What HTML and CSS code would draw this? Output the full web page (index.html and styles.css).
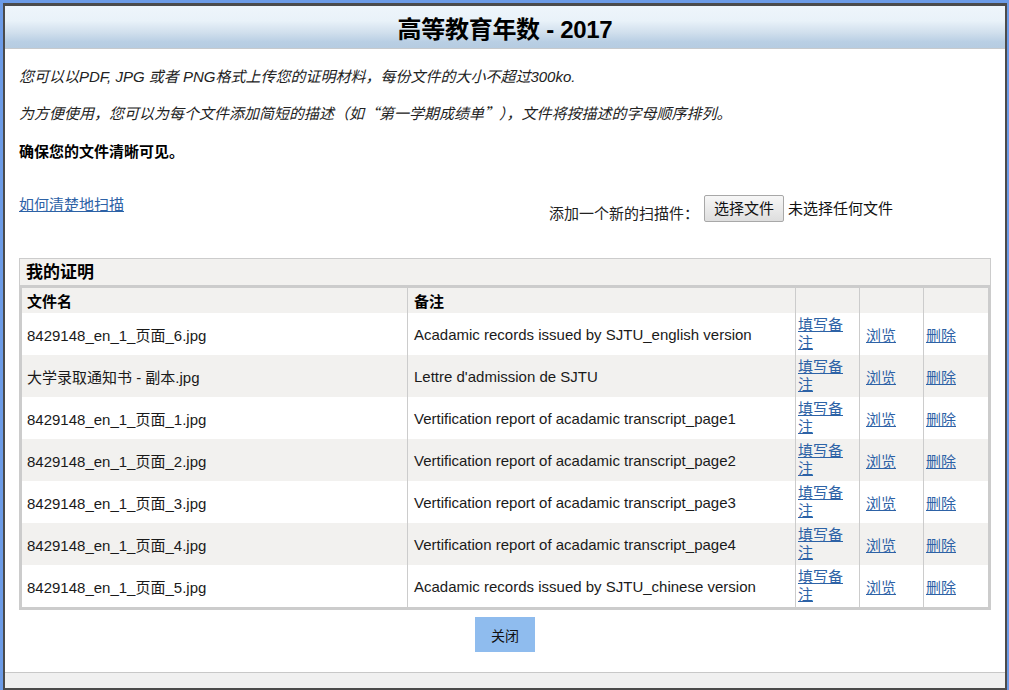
FILE: index.html
```html
<!DOCTYPE html>
<html lang="zh">
<head>
<meta charset="utf-8">
<title>高等教育年数 - 2017</title>
<link rel="stylesheet" href="styles.css">
</head>
<body>
<div class="frame">
  <div class="window">
    <div class="header"><h1 class="title">高等教育年数 - 2017</h1></div>
    <div class="main">
      <p class="intro">您可以以PDF, JPG 或者 PNG格式上传您的证明材料，每份文件的大小不超过300ko.</p>
      <p class="intro">为方便使用，您可以为每个文件添加简短的描述（如<span class="cjk">“</span>第一学期成绩单<span class="cjk">”</span>），文件将按描述的字母顺序排列。</p>
      <p class="strong">确保您的文件清晰可见。</p>
      <div class="tools">
        <a class="link scan-link" href="#">如何清楚地扫描</a>
        <div class="picker">
          <span class="picker-label">添加一个新的扫描件：</span>
          <span class="file-btn">选择文件</span>
          <span class="file-none">未选择任何文件</span>
        </div>
      </div>
      <div class="certs">
        <div class="certs-caption">我的证明</div>
        <table class="certs-table">
          <thead>
            <tr><th class="c-name">文件名</th><th class="c-note">备注</th><th class="c-edit"></th><th class="c-view"></th><th class="c-del"></th></tr>
          </thead>
          <tbody>
            <tr><td class="c-name">8429148_en_1_页面_6.jpg</td><td class="c-note">Acadamic records issued by SJTU_english version</td><td class="c-edit"><a class="link" href="#">填写备注</a></td><td class="c-view"><a class="link" href="#">浏览</a></td><td class="c-del"><a class="link" href="#">删除</a></td></tr>
            <tr><td class="c-name">大学录取通知书 - 副本.jpg</td><td class="c-note">Lettre d'admission de SJTU</td><td class="c-edit"><a class="link" href="#">填写备注</a></td><td class="c-view"><a class="link" href="#">浏览</a></td><td class="c-del"><a class="link" href="#">删除</a></td></tr>
            <tr><td class="c-name">8429148_en_1_页面_1.jpg</td><td class="c-note">Vertification report of acadamic transcript_page1</td><td class="c-edit"><a class="link" href="#">填写备注</a></td><td class="c-view"><a class="link" href="#">浏览</a></td><td class="c-del"><a class="link" href="#">删除</a></td></tr>
            <tr><td class="c-name">8429148_en_1_页面_2.jpg</td><td class="c-note">Vertification report of acadamic transcript_page2</td><td class="c-edit"><a class="link" href="#">填写备注</a></td><td class="c-view"><a class="link" href="#">浏览</a></td><td class="c-del"><a class="link" href="#">删除</a></td></tr>
            <tr><td class="c-name">8429148_en_1_页面_3.jpg</td><td class="c-note">Vertification report of acadamic transcript_page3</td><td class="c-edit"><a class="link" href="#">填写备注</a></td><td class="c-view"><a class="link" href="#">浏览</a></td><td class="c-del"><a class="link" href="#">删除</a></td></tr>
            <tr><td class="c-name">8429148_en_1_页面_4.jpg</td><td class="c-note">Vertification report of acadamic transcript_page4</td><td class="c-edit"><a class="link" href="#">填写备注</a></td><td class="c-view"><a class="link" href="#">浏览</a></td><td class="c-del"><a class="link" href="#">删除</a></td></tr>
            <tr><td class="c-name">8429148_en_1_页面_5.jpg</td><td class="c-note">Acadamic records issued by SJTU_chinese version</td><td class="c-edit"><a class="link" href="#">填写备注</a></td><td class="c-view"><a class="link" href="#">浏览</a></td><td class="c-del"><a class="link" href="#">删除</a></td></tr>
          </tbody>
        </table>
      </div>
      <div class="actions"><button class="close-btn" type="button">关闭</button></div>
    </div>
    <div class="footer"></div>
  </div>
</div>
</body>
</html>
```
FILE: styles.css
```css
html, body {
  margin: 0;
  padding: 0;
  background: #ffffff;
  overflow: hidden;
}
body {
  font-family: "Liberation Sans", "Noto Sans CJK SC", sans-serif;
  font-size: 15px;
  color: #1a1a1a;
}
.cjk {
  font-family: "Noto Sans CJK SC", sans-serif;
}
.frame {
  border-top: 3px solid #6c9be6;
  border-left: 3px solid #6c9be6;
  border-right: 2px solid #6c9be6;
  height: 720px;
}
.window {
  border-top: 3px solid #4b4b4b;
  border-left: 2px solid #4b4b4b;
  border-right: 2px solid #4b4b4b;
  border-bottom: 3px solid #4b4b4b;
  background: #ffffff;
}
.header {
  height: 42px;
  border-bottom: 1px solid #c6c9cc;
  background: linear-gradient(#eef5fb 0%, #e9f2f9 35%, #cfdeec 65%, #b9cfe4 85%, #b6cce1 100%);
  display: flex;
  align-items: center;
  justify-content: center;
}
.title {
  margin: 0;
  font-size: 24px;
  font-weight: bold;
  color: #000;
  letter-spacing: -0.3px;
}
.main {
  padding: 18px 14px 20px;
}
.intro {
  margin: 0 0 16px;
  line-height: 20px;
  font-style: italic;
  color: #222;
}
.strong {
  margin: 18px 0 0;
  line-height: 20px;
  font-weight: bold;
  color: #000;
}
.link {
  color: #2d62a6;
  text-decoration: underline;
  font-size: 15px;
}
.tools {
  display: flex;
  justify-content: space-between;
  align-items: flex-start;
  margin-top: 33px;
}
.scan-link {
  line-height: 20px;
}
.picker {
  display: flex;
  align-items: flex-start;
  margin-right: 98px;
}
.picker-label {
  line-height: 20px;
  margin-top: 9px;
  margin-right: 5px;
  color: #222;
}
.file-btn {
  box-sizing: border-box;
  height: 27px;
  padding: 0 9px;
  line-height: 25px;
  border: 1px solid #a8a8a8;
  border-radius: 2px;
  background: linear-gradient(#f7f7f7, #dedede);
  color: #111;
}
.file-none {
  line-height: 27px;
  margin-left: 4px;
  color: #111;
}
.certs {
  margin-top: 34px;
  border: 1px solid #cccccc;
  background: #f2f1ef;
}
.certs-caption {
  height: 26px;
  line-height: 28px;
  padding-left: 6px;
  font-size: 17px;
  font-weight: bold;
  color: #000;
  border-bottom: 1px solid #cccccc;
}
.certs-table {
  width: 100%;
  border-collapse: collapse;
  border: 2px solid #cccccc;
  table-layout: fixed;
}
.certs-table th {
  height: 25px;
  padding: 0 5px;
  text-align: left;
  font-weight: bold;
  color: #000;
  background: #f2f1ef;
  border-left: 1px solid #cccccc;
}
.certs-table td {
  height: 42px;
  padding: 0 5px;
  vertical-align: middle;
  border-left: 1px solid #cccccc;
  color: #1a1a1a;
}
.certs-table tbody tr:nth-child(odd) td {
  background: #ffffff;
}
.certs-table tbody tr:nth-child(even) td {
  background: #f2f1ef;
}
.certs-table .c-name {
  width: 375px;
  border-left: none;
}
.certs-table .c-note {
  width: 376px;
  padding-left: 6px;
}
.certs-table .c-edit {
  width: 57px;
  padding: 0 4px 0 2px;
  line-height: 18px;
}
.certs-table .c-view {
  width: 52px;
  padding-left: 6px;
}
.certs-table .c-del {
  padding-left: 2px;
}
.actions {
  display: flex;
  justify-content: center;
  margin-top: 7px;
}
.close-btn {
  width: 60px;
  height: 35px;
  border: none;
  background: #8fbcee;
  color: #111;
  font-family: "Liberation Sans", "Noto Sans CJK SC", sans-serif;
  font-size: 14px;
  padding: 0;
}
.footer {
  height: 15px;
  border-top: 1px solid #c8c8c8;
  background: #f0f0f0;
}
```
